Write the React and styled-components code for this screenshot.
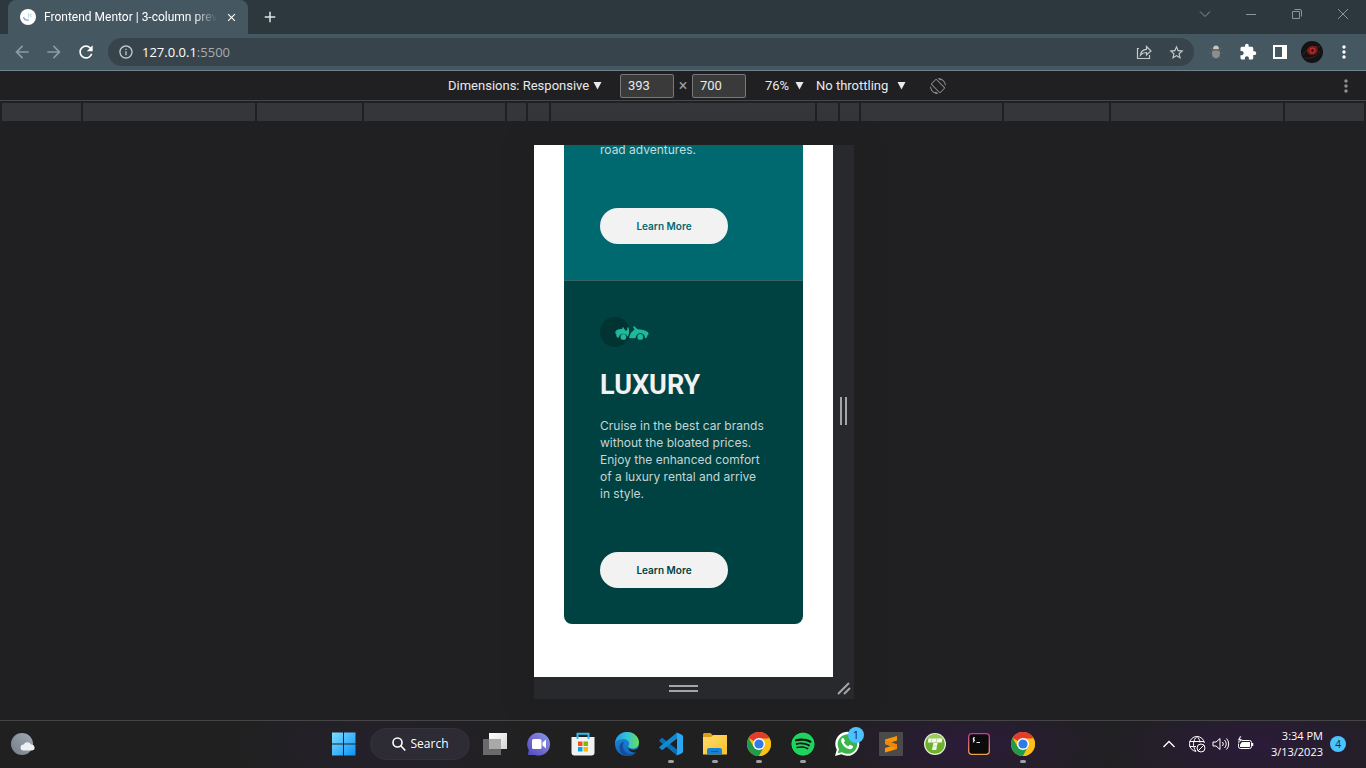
import React from "react";
import styled, { createGlobalStyle } from "styled-components";
import {
  MdArrowBack,
  MdArrowForward,
  MdRefresh,
  MdInfoOutline,
  MdStarBorder,
  MdExtension,
  MdMoreVert,
  MdClose,
  MdAdd,
  MdScreenRotation,
} from "react-icons/md";
import { FaSpotify } from "react-icons/fa";

const UI = `"Open Sans", "Noto Sans", sans-serif`;
const COMPACT = `Roboto, "Open Sans", sans-serif`;
const BODY = `Inter, "Open Sans", sans-serif`;

const GlobalStyle = createGlobalStyle`
  *, *::before, *::after { box-sizing: border-box; }
  html, body, #root { height: 100%; margin: 0; }
  body { background: #202022; overflow: hidden; font: 12px/16px ${UI}; color: #fff; }
  button, input, select { font: inherit; color: inherit; margin: 0; }
  button { border: 0; padding: 0; background: none; }
  svg { display: block; flex: none; }
`;

const Screen = styled.div`
  display: flex;
  flex-direction: column;
  height: 100vh;
`;

/* ---------- browser chrome ---------- */
const TabStrip = styled.header`
  display: flex;
  align-items: flex-start;
  height: 34px;
  padding-left: 8px;
  background: #2d383e;
`;

const Tab = styled.div`
  display: flex;
  align-items: center;
  gap: 8px;
  width: 240px;
  height: 34px;
  padding: 0 10px 0 12px;
  border-radius: 8px 8px 0 0;
  background: #455761;
`;

const TabTitle = styled.span`
  flex: 1;
  min-width: 0;
  white-space: nowrap;
  font-family: ${COMPACT};
  font-size: 12px;
  mask-image: linear-gradient(to right, #000 86%, transparent);
`;

const IconButton = styled.button`
  display: grid;
  place-items: center;
  width: ${(p) => p.$w || 32}px;
  height: ${(p) => p.$h || 28}px;
  color: ${(p) => p.$c || "#fff"};
`;

const WindowControls = styled.div`
  display: flex;
  margin-left: auto;
`;

const Toolbar = styled.nav`
  display: flex;
  align-items: center;
  height: 37px;
  padding: 0 6px;
  background: #455761;
  border-bottom: 1px solid #71838b;
`;

const AddressBar = styled.div`
  display: flex;
  flex: 1;
  align-items: center;
  height: 28px;
  margin: 0 6px;
  padding: 0 2px 0 10px;
  border-radius: 14px;
  background: #38444b;
  color: #c3c9cc;
`;

const Address = styled.div`
  flex: 1;
  margin-left: 8px;
  font-size: 13px;
  line-height: 20px;
  color: #a6adb1;
  b { font-weight: 400; color: #fff; }
`;

/* ---------- device toolbar ---------- */
const DeviceBar = styled.div`
  display: grid;
  grid-template-columns: minmax(0, 1fr) auto minmax(0, 1fr);
  align-items: center;
  height: 30px;
  padding-left: 30px;
  border-bottom: 1px solid #46474a;
  background: #202022;
`;

const DeviceControls = styled.div`
  display: flex;
  align-items: center;
  font-family: ${COMPACT};
  font-size: 13px;
  color: #e8eaed;
`;

const Picker = styled.label`
  display: flex;
  align-items: center;
  justify-content: space-between;
  width: ${(p) => p.$w}px;
  margin-right: ${(p) => p.$gap}px;
`;

const PickerSelect = styled.select`
  appearance: none;
  border: 0;
  padding: 0;
  background: transparent;
  font-size: 13px;
  line-height: 18px;
`;

const SizeInput = styled.input`
  width: 54px;
  height: 24px;
  padding: 0 7px;
  border: 1px solid #77787a;
  border-radius: 2px;
  background: #3a3a3a;
  font-size: 13px;
`;

const Times = styled.span`
  width: 18px;
  text-align: center;
  font-size: 16px;
  color: #9aa0a6;
`;

const Spacer = styled.span`
  width: 19px;
`;

const RotateButton = styled(IconButton)`
  margin-left: 22px;
`;

const KebabButton = styled(IconButton)`
  justify-self: end;
  margin-right: 10px;
`;

const Ruler = styled.div`
  display: flex;
  gap: 2px;
  height: 20px;
  padding: 2px 2px 0;
`;

const Range = styled.div`
  flex: ${(p) => (p.$w ? `0 0 ${p.$w}px` : "1")};
  background: #35363a;
`;

/* ---------- emulated device ---------- */
const Stage = styled.main`
  display: flex;
  flex: 1;
  align-items: flex-start;
  justify-content: center;
  min-height: 0;
  padding: 24px 0 21px 22px;
`;

const Device = styled.div`
  display: grid;
  grid-template-columns: 299px 21px;
  grid-template-rows: minmax(0, 1fr) 22px;
  height: 100%;
  box-shadow: 0 0 18px 6px rgba(32, 30, 32, 0.6);
`;

const Viewport = styled.div`
  display: flex;
  flex-direction: column;
  justify-content: flex-end;
  overflow: hidden;
  padding: 0 30px 53px;
  background: #fff;
`;

const Handle = styled.div`
  display: grid;
  place-items: center;
  background: #28292d;
`;

const Panel = styled.section`
  flex: none;
  padding: 36px;
  background: ${(p) => p.$bg};
  color: ${(p) => p.$bg};
  &:last-child {
    border-top: 1px solid #336664;
    border-radius: 0 0 8px 8px;
  }
`;

const PanelTitle = styled.h2`
  margin: 19px 0 13px;
  font: 700 27px/38px ${COMPACT};
  color: #f2f2f2;
`;

const PanelText = styled.p`
  margin: 0 0 50px;
  font: 400 12px/17px ${BODY};
  white-space: nowrap;
  color: rgba(255, 255, 255, 0.78);
`;

const LearnMore = styled.button`
  display: block;
  width: 128px;
  height: 36px;
  border-radius: 18px;
  background: #f2f2f2;
  font: 600 10px/16px ${BODY};
  color: inherit;
`;

/* ---------- taskbar ---------- */
const Taskbar = styled.footer`
  display: grid;
  grid-template-columns: minmax(0, 1fr) auto minmax(0, 1fr);
  align-items: stretch;
  height: 48px;
  padding-bottom: 1px;
  border-top: 1px solid #454547;
  background:
    radial-gradient(ellipse 150px 50px at 71% 50%, #2c1b3a, transparent),
    radial-gradient(ellipse 160px 60px at 92% 50%, #2b1b3a, transparent),
    radial-gradient(ellipse 160px 60px at 28% 50%, #25202d, transparent),
    #202020;
`;

const Apps = styled.div`
  display: flex;
  padding-left: 1px;
`;

const AppButton = styled.button`
  position: relative;
  display: grid;
  place-items: center;
  width: 44px;
  height: 46px;
  &::after {
    content: "";
    position: absolute;
    left: 19px;
    bottom: 4px;
    width: 6px;
    height: 3px;
    border-radius: 2px;
    background: ${(p) => (p.$running ? "#a0a0a0" : "transparent")};
  }
`;

const SearchButton = styled.button`
  display: flex;
  align-items: center;
  justify-content: center;
  gap: 5px;
  width: 100px;
  height: 32px;
  margin: 7px 3px 0 4px;
  border: 1px solid #35323b;
  border-radius: 16px;
  background: #2d2b34;
  font-size: 12px;
`;

const Count = styled.span`
  position: absolute;
  top: 6px;
  right: 5px;
  width: 16px;
  height: 16px;
  border-radius: 8px;
  background: #4cc2ff;
  font-size: 11px;
  line-height: 16px;
  text-align: center;
  color: #10242f;
`;

const Weather = styled.button`
  justify-self: start;
  width: 46px;
  display: grid;
  place-items: center;
`;

const Tray = styled.div`
  display: flex;
  align-items: center;
  justify-content: flex-end;
  padding-right: 20px;
`;

const TrayIcons = styled.div`
  display: flex;
  align-items: center;
  gap: 6px;
  margin-right: 17px;
`;

const HiddenIcons = styled.button`
  width: 20px;
`;

const Clock = styled.time`
  font-size: 11px;
  line-height: 16px;
  text-align: right;
`;

const Notices = styled.span`
  width: 16px;
  height: 16px;
  margin-left: 7px;
  border-radius: 8px;
  background: #4cc2ff;
  font-size: 10px;
  line-height: 16px;
  text-align: center;
  color: #10242f;
`;

/* ---------- drawings ---------- */
const Line = ({ w = 16, h = w, d, sw = 1, ...rest }) => (
  <svg width={w} height={h} viewBox={`0 0 ${w} ${h}`} fill="none" stroke="currentColor" strokeWidth={sw} {...rest}>
    <path d={d} />
  </svg>
);

const Favicon = () => (
  <svg width="16" height="16" viewBox="0 0 16 16">
    <circle cx="8" cy="8" r="8" fill="#fff" />
    <path d="M3.500 8c.6 2.400 2.600 3.500 5.500 3" fill="none" stroke="#8e9cc0" strokeWidth="1.200" />
    <path d="M8.500 4v5M11.500 5 10 6.600l1.500 1.600" fill="none" stroke="#b9e3e8" strokeWidth="1.200" />
  </svg>
);

const Triangle = () => (
  <svg width="9" height="8" viewBox="0 0 9 8"><path d="M.5 0h8L4.500 7.500z" fill="#e8eaed" /></svg>
);

const Bug = () => (
  <svg width="16" height="16" viewBox="0 0 16 16">
    <path d="M2 4l3 2M14 4l-3 2M1 9h4M15 9h-4M3 14l2-2M13 14l-2-2" stroke="#59666d" strokeWidth="1" />
    <ellipse cx="8" cy="9.500" rx="4" ry="5" fill="#8d8d8d" />
    <path d="M5 5a3 3.500 0 0 1 6 0z" fill="#c9c5bd" />
    <path d="M5 6h6" stroke="#56504a" />
  </svg>
);

const Avatar = () => (
  <svg width="22" height="22" viewBox="0 0 22 22">
    <circle cx="11" cy="11" r="11" fill="#141314" />
    <path d="M2 14c4-7 10-9 17-8M4 17c7 1 12-2 15-7" stroke="#2f2a2b" fill="none" />
    <ellipse cx="11.500" cy="9.500" rx="5.500" ry="4.500" fill="#7d1719" transform="rotate(-15 11 10)" />
    <circle cx="11.500" cy="9.500" r="2.500" fill="none" stroke="#c93f3a" />
    <circle cx="11.500" cy="9.500" r="1" fill="#2a0808" />
  </svg>
);

const LuxuryCar = () => (
  <svg width="49" height="30" viewBox="0 0 49 30">
    <circle cx="15" cy="15" r="15" fill="#003332" />
    <g fill="#1fb89b">
      <path d="M15.200 14.500l1.500-.3-.8-.8c1.800-1 4-1.500 6.800-1.600l-.6-1.300h1.500l.9 1.700.6 1.300h1.500l.7-.5-.1-2.500h1.300l.5 2 .3 2.500-.9 3.500-.7 1.300c-.8-1.900-2.400-3.100-4.400-3.100-2.400 0-4.200 1.600-4.700 4.100l-1.800-.5-.6-2.300.5-.5-1.100-.5z" />
      <path d="M28.900 21l1.600-4.300c.4-1.100 1.200-1.800 2.200-2.400l1.800-1.700-1.500-2.800.9-.8 3.800 3.200c3.600.1 7.600.9 10 2.800.8.700.9 1.700.7 2.800l-1 .7-.6 2.200-1.700.3c-.2-2.800-2.200-4.800-4.800-4.800s-4.600 2-4.800 5z" />
      <circle cx="23.400" cy="19.900" r="2.900" />
      <circle cx="40.300" cy="19.900" r="2.900" />
    </g>
  </svg>
);

const Windows = () => (
  <svg width="24" height="24" viewBox="0 0 24 24">
    <defs><linearGradient id="win" x2="1" y2="1"><stop stopColor="#7fdcff" /><stop offset="1" stopColor="#0a93f5" /></linearGradient></defs>
    <path d="M0 .5h11v11H0zM12 .5h11.500v11H12zM0 12.500h11v11H0zM12 12.500h11.500v11H12z" fill="url(#win)" />
  </svg>
);

const TaskView = () => (
  <svg width="24" height="24" viewBox="0 0 24 24">
    <defs><linearGradient id="tv" x2="1" y2="1"><stop stopColor="#fff" /><stop offset="1" stopColor="#d4d4d4" /></linearGradient></defs>
    <path d="M6 1h18v16H6z" fill="url(#tv)" />
    <path d="M0 7h18v16H0z" fill="#6a6a6a" />
    <path d="M6 7h12v10H6z" fill="#a9a9a9" />
  </svg>
);

const Chat = () => (
  <svg width="24" height="24" viewBox="0 0 24 24">
    <defs><linearGradient id="chat" x1="1" x2="0" y2="1"><stop stopColor="#7ba0ea" /><stop offset=".45" stopColor="#7b6fd3" /><stop offset="1" stopColor="#4a4cc0" /></linearGradient></defs>
    <path d="M12 .8A11.400 11.400 0 1 1 8 23H1l.8-5A11.400 11.400 0 0 1 12 .8z" fill="url(#chat)" />
    <rect x="5" y="7" width="9.500" height="10" rx="1.500" fill="#fff" />
    <path d="M15.500 10.500 19 7.500v9l-3.500-3z" fill="#fff" />
  </svg>
);

const Store = () => (
  <svg width="24" height="24" viewBox="0 0 24 24">
    <path d="M.5 5h23v15.500a3 3 0 0 1-3 3h-17a3 3 0 0 1-3-3z" fill="#f2f2f2" />
    <path d="M6.500 7V1.800h11V7" fill="none" stroke="#35bdf0" strokeWidth="2" />
    <path d="M7 9.500h4.500V14H7z" fill="#f25022" /><path d="M12.500 9.500H17V14h-4.500z" fill="#7fba00" />
    <path d="M7 15h4.500v4.500H7z" fill="#00a4ef" /><path d="M12.500 15H17v4.500h-4.500z" fill="#ffb900" />
  </svg>
);

const Edge = () => (
  <svg width="24" height="24" viewBox="0 0 24 24">
    <defs>
      <linearGradient id="e1" x2="1"><stop stopColor="#1f9be4" /><stop offset=".5" stopColor="#33c3dc" /><stop offset="1" stopColor="#6adf52" /></linearGradient>
      <linearGradient id="e2" x2="0" y2="1"><stop stopColor="#1d8fdc" /><stop offset="1" stopColor="#1065bd" /></linearGradient>
    </defs>
    <circle cx="12" cy="12" r="12" fill="url(#e2)" />
    <path d="M0 11C1 4.500 5.800 0 12 0c7 0 12 5 12 10.500 0 3.700-2.700 6-6.200 6-3 0-4.600-1-4.600-2 0-.8 1-1.200 1-2.900 0-2.400-2.400-4.600-6-4.600C4.800 7 1.500 8.500 0 11z" fill="url(#e1)" />
    <path d="M9.500 9.500C7 12 7.500 17.500 11 20.500c3 2.500 7.500 2.300 11-1C19 24 13.500 25 9 23.600 4.500 21 3 15 5.500 11.800c1-1.300 2.500-2.100 4-2.300z" fill="#134f9c" />
    <path d="M13.200 14.500c0 2 2.800 3.800 6.300 3.300 1.800-.3 3-1 4-2.300l.5-3L25 24l-3.300-3.800c-4 1-8.700-.7-8.500-5.700z" fill="#202020" />
  </svg>
);

const VsCode = () => (
  <svg width="24" height="24" viewBox="0 0 24 24">
    <path d="M.6 8 2.500 6.300c.4-.3.900-.3 1.300 0L18 17.500v6L.6 9.300c-.4-.4-.4-.9 0-1.300z" fill="#0a6fb8" />
    <path d="M.6 16l1.900 1.700c.4.300.9.300 1.300 0L18 6.500v-6L.6 14.700c-.4.400-.4.900 0 1.300z" fill="#1389d0" />
    <path d="M17.200 23.700c-.5.200-1 .1-1.400-.3.800.7 2.200.2 2.200-1V1.600c0-1.200-1.400-1.700-2.200-1 .4-.4.900-.5 1.400-.3l5.700 2.400c.7.400 1.100 1 1.100 1.700v15.200c0 .7-.4 1.300-1.100 1.700z" fill="#2aa7f3" />
  </svg>
);

const Folder = () => (
  <svg width="24" height="24" viewBox="0 0 24 24">
    <defs><linearGradient id="fo" x2="1" y2="1"><stop stopColor="#ffdc6b" /><stop offset="1" stopColor="#f9bf2d" /></linearGradient></defs>
    <path d="M0 2.500C0 1.700.7 1 1.500 1h6L10 3.500V8H0z" fill="#dd9c12" />
    <path d="M0 5h8l2.300-2H24v19.500H0z" fill="url(#fo)" />
    <path d="M4 22.500V18a2 2 0 0 1 2-2h11a2 2 0 0 1 2 2v4.500z" fill="#1583d5" />
    <path d="M8 19.500h7" stroke="#0c59a0" />
  </svg>
);

const Chrome = () => (
  <svg width="24" height="24" viewBox="0 0 24 24">
    <circle cx="12" cy="12" r="12" fill="#fbc117" />
    <path d="M12 12 1.600 6A12 12 0 0 1 22.400 6z" fill="#e33b2e" />
    <path d="M1.600 6A12 12 0 0 0 12 24l5.200-9L12 12 6.800 15z" fill="#229a4b" />
    <path d="M12 6.600h10.700A12 12 0 0 1 12 24l5-9z" fill="#fbc117" />
    <circle cx="12" cy="12" r="6" fill="#fff" />
    <circle cx="12" cy="12" r="4.600" fill="#2f7be8" />
  </svg>
);

const Spotify = styled(FaSpotify)`
  border-radius: 12px;
  background: #141414;
  color: #1ed45e;
`;

const WhatsApp = () => (
  <svg width="26" height="26" viewBox="0 0 26 26">
    <path d="M1 25l1.800-6.300A12 12 0 1 1 7.400 23.300z" fill="#fff" />
    <path d="M3.700 22.300 5 18A9.800 9.800 0 1 1 8 21.200z" fill="#3ab54a" />
    <path d="M9.600 7.300c-.4-.5-1-.5-1.500 0-1.200 1.200-1.300 2.700-.3 4.600 1.700 3.200 4 5.200 7.300 6.200 2 .5 4-.8 3.900-2.600 0-.4-2.700-1.800-3.200-1.700-.5.100-1 1.500-1.500 1.500-1 0-4-2.600-4.300-3.800-.1-.4 1-1.200 1-1.700z" fill="#fff" />
  </svg>
);

const Sublime = () => (
  <svg width="24" height="24" viewBox="0 0 24 24">
    <rect width="24" height="24" rx="1" fill="#4a4a4a" />
    <path d="M6 7.500 18 4v4.500l-6.500 2L18 12.500V17L6 20.500V16l6.500-2L6 12z" fill="#ff9800" />
    <path d="M6 7.500v4.500l12 5v-4.500z" fill="#f0870a" />
  </svg>
);

const GreenT = () => (
  <svg width="24" height="24" viewBox="0 0 24 24">
    <circle cx="12" cy="12" r="11" fill="#e9f3dc" />
    <circle cx="12" cy="12" r="9.800" fill="#6fb12c" />
    <path d="M3.500 7A10 10 0 0 1 20.500 7z" fill="#9acb5c" />
    <path d="M5.500 6.500h14l-.8 4h-4L13.200 18H9l1.500-7.500h-5.800z" fill="#f6f9f1" />
    <path d="M9 6.500 8.300 10.500M14 6.500l-1 4M10 14h4.500M10.500 10.500h4" stroke="#a7c77f" strokeWidth=".7" />
  </svg>
);

const Terminal = () => (
  <svg width="24" height="24" viewBox="0 0 24 24">
    <defs><linearGradient id="te" x2="0" y2="1"><stop stopColor="#d0399c" /><stop offset="1" stopColor="#eda04b" /></linearGradient></defs>
    <rect x="1.700" y="1.700" width="20.600" height="20.600" rx="3" fill="#0b0b0b" stroke="url(#te)" strokeWidth="1.300" />
    <path d="M7.800 5.500 5.800 7l2 1.300-2 1.400M6.800 5v5.500M9.500 10.500h3.500" stroke="#fff" fill="none" strokeWidth=".9" />
  </svg>
);

const Cloud = () => (
  <svg width="24" height="24" viewBox="0 0 24 24">
    <defs><linearGradient id="mo" x1="1" x2="0" y2="1"><stop stopColor="#a3abb3" /><stop offset="1" stopColor="#727d88" /></linearGradient></defs>
    <circle cx="11" cy="12" r="11" fill="url(#mo)" />
    <path d="M12.500 18.500a3 3 0 0 1 .2-6 4 4 0 0 1 7.300 0 3 3 0 0 1 1 6z" fill="#eef1f4" />
  </svg>
);

const Battery = () => (
  <svg width="18" height="18" viewBox="0 0 18 18" fill="none" stroke="#fff">
    <rect x="2.500" y="5.500" width="13" height="8" rx="2" />
    <path d="M6 7h8v5H4v-2.500z" fill="#fff" stroke="none" />
    <path d="M16.500 8v3" strokeWidth="1.500" />
    <path d="M4 1 1.500 5.500h2L2.500 9l4-5H4.300L5.500 1z" fill="#fff" stroke="#231c2b" strokeWidth=".5" />
  </svg>
);

const APPS = [
  { name: "Task View", Icon: TaskView },
  { name: "Chat", Icon: Chat },
  { name: "Microsoft Store", Icon: Store },
  { name: "Edge", Icon: Edge },
  { name: "Visual Studio Code", Icon: VsCode, running: true },
  { name: "File Explorer", Icon: Folder, running: true },
  { name: "Chrome", Icon: Chrome, running: true },
  { name: "Spotify", Icon: () => <Spotify size={24} />, running: true },
  { name: "WhatsApp", Icon: WhatsApp, count: 1 },
  { name: "Sublime Text", Icon: Sublime },
  { name: "Editor", Icon: GreenT },
  { name: "Terminal", Icon: Terminal },
  { name: "Chrome profile", Icon: Chrome, running: true },
];

const RANGES = [0, 172, 105, 141, 19, 21, 264, 21, 19, 141, 105, 172, 0];

const DropDown = ({ label, value, width, gap }) => (
  <Picker $w={width} $gap={gap}>
    <PickerSelect aria-label={label} defaultValue={value}>
      <option>{value}</option>
    </PickerSelect>
    <Triangle />
  </Picker>
);

export default function App() {
  return (
    <Screen>
      <GlobalStyle />
      <TabStrip>
        <Tab>
          <Favicon />
          <TabTitle>Frontend Mentor | 3-column prev</TabTitle>
          <MdClose size={13} />
        </Tab>
        <IconButton $w={44} $h={34} $c="#dfe3e5" aria-label="New tab"><MdAdd size={18} /></IconButton>
        <WindowControls>
          <IconButton $w={46} $c="#8b9499" aria-label="Search tabs"><Line w={12} d="M1 3.500l5 5 5-5" /></IconButton>
          <IconButton $w={46} $c="#8b9499" aria-label="Minimize"><Line w={12} d="M1 6.500h10" /></IconButton>
          <IconButton $w={46} $c="#8b9499" aria-label="Restore"><Line w={12} d="M1.500 3.500h7v7h-7zM3.500 1.500h5.500a1.500 1.500 0 0 1 1.500 1.500v5.500" /></IconButton>
          <IconButton $w={46} $c="#8b9499" aria-label="Close"><Line w={12} d="M1 1l10 10M11 1 1 11" /></IconButton>
        </WindowControls>
      </TabStrip>
      <Toolbar>
        <IconButton $c="#8f9ba1" aria-label="Back"><MdArrowBack size={20} /></IconButton>
        <IconButton $c="#8f9ba1" aria-label="Forward"><MdArrowForward size={20} /></IconButton>
        <IconButton aria-label="Reload"><MdRefresh size={20} /></IconButton>
        <AddressBar>
          <MdInfoOutline size={16} />
          <Address><b>127.0.0.1</b>:5500</Address>
          <IconButton $c="#c3c9cc" aria-label="Share"><Line w={16} sw={1.2} d="M3 4.500H1.500v10h12V11M4.500 11c.5-4 2.500-5.500 6-5.700V2.500L15 7l-4.500 4V8.500c-2.500 0-4.500.7-6 2.500z" /></IconButton>
          <IconButton $c="#c3c9cc" aria-label="Bookmark"><MdStarBorder size={17} /></IconButton>
        </AddressBar>
        <IconButton aria-label="Extension"><Bug /></IconButton>
        <IconButton aria-label="Extensions"><MdExtension size={18} /></IconButton>
        <IconButton aria-label="Side panel">
          <svg width="14" height="14"><path d="M0 0h14v14H0zM2 2v10h7V2z" fill="#fff" fillRule="evenodd" /></svg>
        </IconButton>
        <IconButton aria-label="Profile"><Avatar /></IconButton>
        <IconButton aria-label="Menu"><MdMoreVert size={20} /></IconButton>
      </Toolbar>

      <DeviceBar>
        <span />
        <DeviceControls>
          <DropDown label="Dimensions" value="Dimensions: Responsive" width={154} gap={18} />
          <SizeInput aria-label="Width" defaultValue="393" />
          <Times>×</Times>
          <SizeInput aria-label="Height" defaultValue="700" />
          <Spacer />
          <DropDown label="Zoom" value="76%" width={39} gap={12} />
          <DropDown label="Throttling" value="No throttling" width={90} gap={0} />
          <RotateButton $w={20} $c="#8b8c8e" aria-label="Rotate">
            <MdScreenRotation size={16} />
          </RotateButton>
        </DeviceControls>
        <KebabButton $w={20} $c="#8f9092" aria-label="More options"><MdMoreVert size={20} /></KebabButton>
      </DeviceBar>
      <Ruler>
        {RANGES.map((w, i) => <Range key={i} $w={w} />)}
      </Ruler>

      <Stage>
        <Device>
          <Viewport>
            <Panel $bg="#006970">
              <PanelText>road adventures.</PanelText>
              <LearnMore>Learn More</LearnMore>
            </Panel>
            <Panel $bg="#004241">
              <LuxuryCar />
              <PanelTitle>LUXURY</PanelTitle>
              <PanelText>
                Cruise in the best car brands<br />
                without the bloated prices.<br />
                Enjoy the enhanced comfort<br />
                of a luxury rental and arrive<br />
                in style.
              </PanelText>
              <LearnMore>Learn More</LearnMore>
            </Panel>
          </Viewport>
          <Handle><Line w={7} h={28} sw={2} d="M1 0v28M6 0v28" color="#a5a5a7" /></Handle>
          <Handle><Line w={29} h={8} sw={2} d="M0 2h29M0 7h29" color="#a5a5a7" /></Handle>
          <Handle><Line w={14} sw={2} d="M1 13 12 2M7 13l6-6" color="#a5a5a7" /></Handle>
        </Device>
      </Stage>

      <Taskbar>
        <Weather aria-label="Weather"><Cloud /></Weather>
        <Apps>
          <AppButton aria-label="Start"><Windows /></AppButton>
          <SearchButton>
            <Line w={14} sw={1.6} d="M5.500 1a4.500 4.500 0 1 1 0 9 4.500 4.500 0 0 1 0-9zM9 9l4.300 4.500" />
            Search
          </SearchButton>
          {APPS.map(({ name, Icon, running, count }) => (
            <AppButton key={name} $running={running} aria-label={name}>
              <Icon />
              {count && <Count>{count}</Count>}
            </AppButton>
          ))}
        </Apps>
        <Tray>
          <TrayIcons>
            <HiddenIcons aria-label="Show hidden icons">
              <Line w={14} sw={1.3} d="M1.500 10 7 4.500l5.500 5.500" />
            </HiddenIcons>
            <Line w={18} d="M16.400 8A7.500 7.500 0 1 0 8 16.400M1.500 6.500h14.500M1.500 11.500H8M8 16.400C4.500 12 4.500 5 9 1.500c1.800 1.500 2.700 3.500 3 6M13 9a4 4 0 1 1 0 8 4 4 0 0 1 0-8zM10.200 15.800l5.600-5.600" />
            <Line w={18} d="M1 7h3l4-3.500v11L4 11H1zM10.500 7a3 3 0 0 1 0 4M12.500 5a5.500 5.500 0 0 1 0 8M14.500 3.500a8 8 0 0 1 0 11" />
            <Battery />
          </TrayIcons>
          <Clock>3:34 PM<br />3/13/2023</Clock>
          <Notices>4</Notices>
        </Tray>
      </Taskbar>
    </Screen>
  );
}
